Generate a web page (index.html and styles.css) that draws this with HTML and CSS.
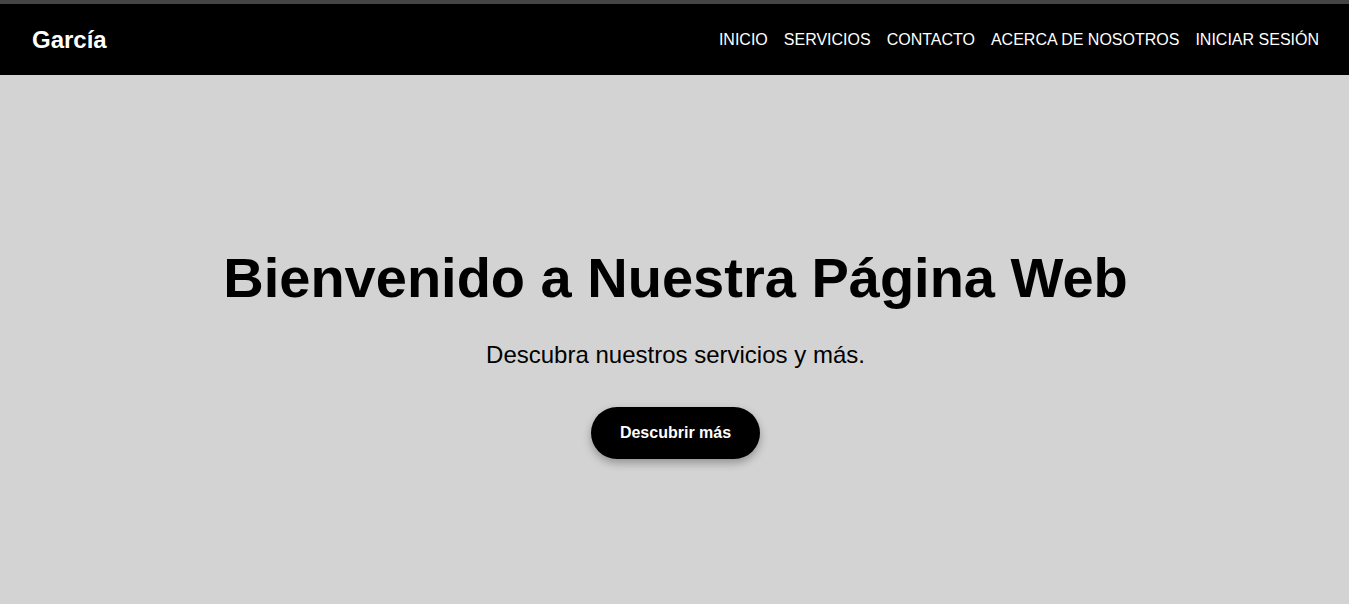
FILE: index.html
```html
<!DOCTYPE html>
<html lang="es">
<head>
<meta charset="utf-8">
<title>García</title>
<link rel="stylesheet" href="styles.css">
</head>
<body>
<div class="topstrip"></div>
<header class="header">
  <div class="logo">García</div>
  <nav class="nav">
    <a href="#">INICIO</a>
    <a href="#">SERVICIOS</a>
    <a href="#">CONTACTO</a>
    <a href="#">ACERCA DE NOSOTROS</a>
    <a href="#">INICIAR SESIÓN</a>
  </nav>
</header>
<main class="hero">
  <h1 class="hero-title">Bienvenido a Nuestra Página Web</h1>
  <p class="hero-sub">Descubra nuestros servicios y más.</p>
  <a class="hero-btn" href="#">Descubrir más</a>
</main>
</body>
</html>
```
FILE: styles.css
```css
html, body {
  margin: 0;
  padding: 0;
  height: 100%;
}
body {
  font-family: "Liberation Sans", Arial, sans-serif;
  background: #d3d3d3;
  color: #000;
  overflow: hidden;
}
.topstrip {
  height: 4px;
  background: #444444;
}
.header {
  height: 71px;
  background: #000;
  display: flex;
  align-items: center;
  justify-content: space-between;
  padding: 1px 30px 0 32px;
  box-sizing: border-box;
}
.logo {
  color: #fff;
  font-weight: bold;
  font-size: 24px;
}
.nav {
  display: flex;
  gap: 16px;
}
.nav a {
  color: #fff;
  text-decoration: none;
  font-size: 16px;
}
.hero {
  display: flex;
  flex-direction: column;
  align-items: center;
  padding: 170px 0 0 2px;
  text-align: center;
}
.hero-title {
  margin: 0 0 31px;
  font-size: 56px;
  font-weight: bold;
  line-height: normal;
}
.hero-sub {
  margin: 0 0 38px;
  font-size: 24px;
  line-height: normal;
}
.hero-btn {
  display: inline-block;
  background: #000;
  color: #fff;
  text-decoration: none;
  font-weight: bold;
  font-size: 16px;
  padding: 17px 29px;
  border-radius: 30px;
  box-shadow: 0 4px 8px rgba(0, 0, 0, 0.3);
}
```
